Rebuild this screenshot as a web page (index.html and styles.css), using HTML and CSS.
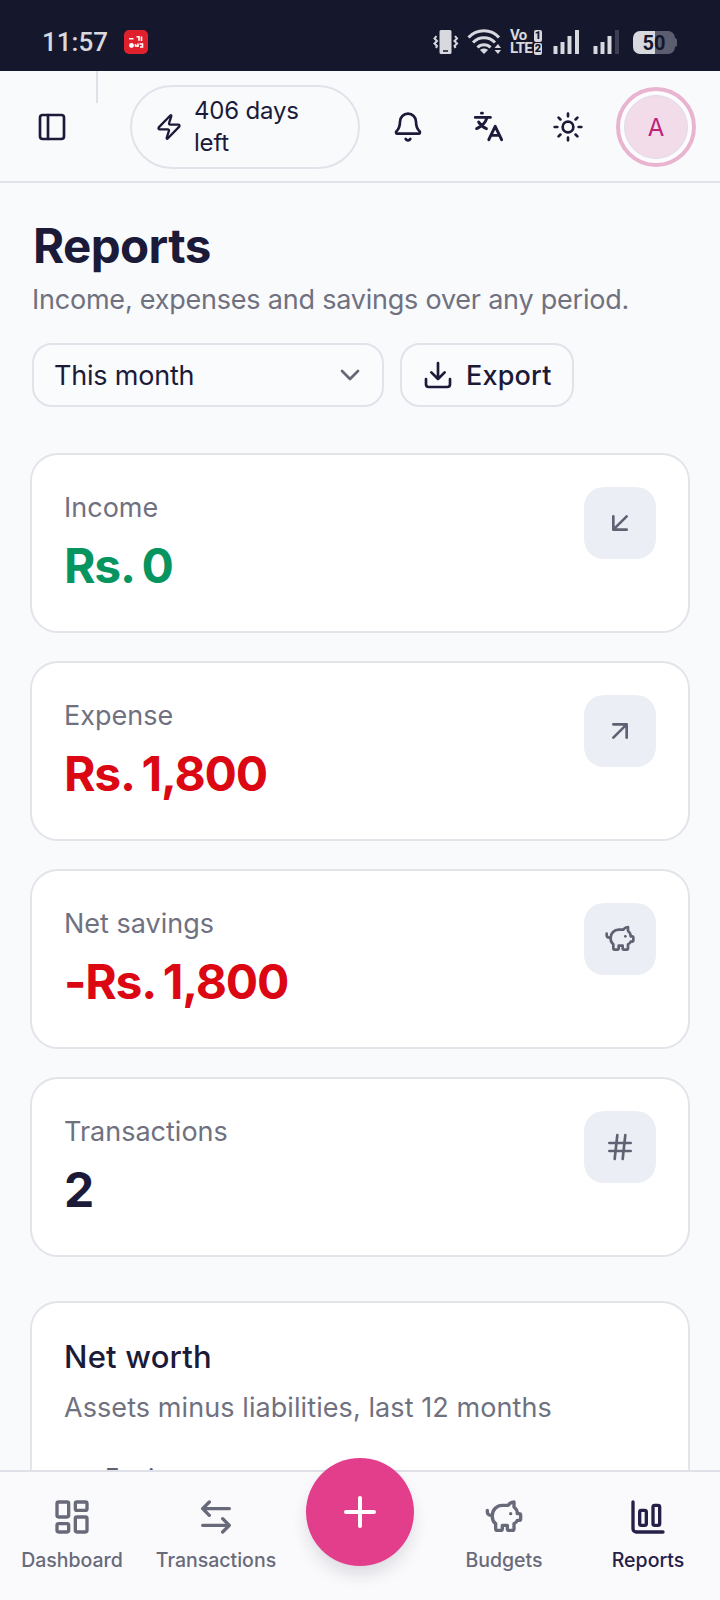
FILE: index.html
```html
<!DOCTYPE html>
<html lang="en">
<head>
<meta charset="utf-8">
<title>Reports</title>
<link rel="stylesheet" href="styles.css">
</head>
<body>
<svg class="defs" aria-hidden="true">
  <symbol id="piggy" viewBox="0 0 24 24"><path d="M11 17h3v2a1 1 0 0 0 1 1h2a1 1 0 0 0 1-1v-3a3.160 3.160 0 0 0 2-2h1a1 1 0 0 0 1-1v-2a1 1 0 0 0-1-1h-1a5 5 0 0 0-2-4V3a4 4 0 0 0-3.200 1.600l-.300.400H11a6 6 0 0 0-6 6v1a5 5 0 0 0 2 4v3a1 1 0 0 0 1 1h2a1 1 0 0 0 1-1z"/><path d="M16 10h.010"/><path d="M2 8v1a2 2 0 0 0 2 2h1"/></symbol>
</svg>
<div class="screen">
  <div class="status">
    <span class="clock">11:57</span>
    <svg class="app-badge" viewBox="0 0 24 24"><rect width="24" height="24" rx="5" fill="#e0202c"/><g stroke="#fff" fill="none" stroke-width="1.600"><path d="M5 8.700h4.500M12.500 6.800h2.500v4M17.500 6.500v4.500M11.500 14v2h2M14 13.500v3.500M15.500 14h3v3h-2.500"/></g><circle cx="7.500" cy="15.500" r="2.400" fill="#fff"/></svg>
    <div class="status-icons">
      <svg class="vibrate" viewBox="0 0 26 26"><path d="M8 1h9a1.500 1.500 0 0 1 1.500 1.500v21A1.500 1.500 0 0 1 17 25H8a1.500 1.500 0 0 1-1.500-1.500v-21A1.500 1.500 0 0 1 8 1z" fill="#d8d8df"/><path d="M10 22h5" stroke="#15172d" stroke-width="1.500"/><path d="M3.500 7 1.500 9.500l2.500 2.500-2.500 2.500 2.500 2.500-1 2M22 7l2 2.500-2.500 2.500 2.500 2.500-2.500 2.500 1 2" fill="none" stroke="#d8d8df" stroke-width="2"/></svg>
      <svg class="wifi" viewBox="0 0 34 26"><g fill="none" stroke="#d8d8df" stroke-width="3"><path d="M1.500 8.500C10-.400 24-.400 32 8.500"/><path d="M6 13.500c6-6.300 16-6.300 22 0"/><path d="M10.500 18.500c3.500-3.800 9.500-3.800 13 0"/></g><path d="M13 21c2.300-2 5.700-2 8 0L17 25z" fill="#d8d8df"/><path d="M27.500 19 31 15l3 4zM27.500 21h6.500L31 25z" fill="#d8d8df"/></svg>
      <div class="volte"><div>Vo<b>1</b></div><div>LTE<b>2</b></div></div>
      <svg class="bars" viewBox="0 0 28 26"><path d="M2.500 17v8M9.500 13v12M16.500 7v18M24 1v24" stroke="#d8d8df" stroke-width="4"/></svg>
      <svg class="bars bars-two" viewBox="0 0 28 26"><path d="M2.500 17v8M9.500 13v12M16.500 7v18" stroke="#d8d8df" stroke-width="4"/><path d="M24 1v24" stroke="#3d3e52" stroke-width="4"/></svg>
      <div class="battery"><span>50</span></div><i class="nub"></i>
    </div>
  </div>

  <header class="topbar">
    <span class="divider"></span>
    <svg class="ico panel" viewBox="0 0 24 24"><rect x="3" y="3" width="18" height="18" rx="2"/><path d="M9 3v18"/></svg>
    <div class="pill">
      <svg class="ico zap" viewBox="0 0 24 24"><path d="M4 14a1 1 0 0 1-.780-1.630l9.900-10.200a.5.5 0 0 1 .860.460l-1.920 6.020A1 1 0 0 0 13 10h7a1 1 0 0 1 .780 1.630l-9.900 10.200a.5.5 0 0 1-.860-.460l1.920-6.020A1 1 0 0 0 11 14z"/></svg>
      <span>406 days left</span>
    </div>
    <svg class="ico bell" viewBox="0 0 24 24"><path d="M10.268 21a2 2 0 0 0 3.464 0"/><path d="M3.262 15.326A1 1 0 0 0 4 17h16a1 1 0 0 0 .740-1.673C19.410 13.956 18 12.499 18 8A6 6 0 0 0 6 8c0 4.499-1.411 5.956-2.738 7.326"/></svg>
    <svg class="ico lang" viewBox="0 0 24 24"><path d="M7.100 1.600h.7M2.500 4.800h11.300M11.200 5.200C10.200 8.500 7.500 11.500 3.500 13.200M5 8.300c1.300 2.300 3.300 4 5.800 5M12.600 21.500l4.800-10 4.800 10M14.200 18.300h6.400"/></svg>
    <svg class="ico sun" viewBox="0 0 24 24"><circle cx="12" cy="12" r="4"/><path d="M12 2v2M12 20v2M4.930 4.930l1.410 1.410M17.660 17.660l1.410 1.410M2 12h2M20 12h2M6.340 17.660l-1.410 1.410M19.070 4.930l-1.410 1.410"/></svg>
    <div class="avatar"><span>A</span></div>
  </header>

  <main class="content">
    <h1>Reports</h1>
    <p class="subtitle">Income, expenses and savings over any period.</p>
    <div class="controls">
      <div class="select"><span>This month</span><svg class="ico chevron" viewBox="0 0 24 24"><path d="m6 9 6 6 6-6"/></svg></div>
      <div class="export"><svg class="ico" viewBox="0 0 24 24"><path d="M12 15V3M21 15v4a2 2 0 0 1-2 2H5a2 2 0 0 1-2-2v-4M7 10l5 5 5-5"/></svg><span>Export</span></div>
    </div>
    <section class="stats">
      <div class="card"><div><p class="label">Income</p><p class="value green">Rs. 0</p></div><div class="tile"><svg class="ico" viewBox="0 0 24 24"><path d="M17 7 7 17M17 17H7V7"/></svg></div></div>
      <div class="card"><div><p class="label">Expense</p><p class="value red">Rs. 1,800</p></div><div class="tile"><svg class="ico" viewBox="0 0 24 24"><path d="M7 7h10v10M7 17 17 7"/></svg></div></div>
      <div class="card"><div><p class="label">Net savings</p><p class="value red">-Rs. 1,800</p></div><div class="tile"><svg class="ico"><use href="#piggy"/></svg></div></div>
      <div class="card"><div><p class="label">Transactions</p><p class="value">2</p></div><div class="tile"><svg class="ico" viewBox="0 0 24 24"><path d="M4 9h16M4 15h16M10 3 8 21M16 3l-2 18"/></svg></div></div>
    </section>
    <section class="worth">
      <h2>Net worth</h2>
      <p class="worth-sub">Assets minus liabilities, last 12 months</p>
      <p class="legend">Equity</p>
    </section>
  </main>

  <nav class="bottom">
    <div class="tab"><svg class="ico" viewBox="0 0 24 24"><rect x="3" y="3" width="7" height="9" rx="1"/><rect x="14" y="3" width="7" height="5" rx="1"/><rect x="14" y="12" width="7" height="9" rx="1"/><rect x="3" y="16" width="7" height="5" rx="1"/></svg><span>Dashboard</span></div>
    <div class="tab"><svg class="ico" viewBox="0 0 24 24"><path d="M8 3 4 7l4 4M4 7h16M16 21l4-4-4-4M20 17H4"/></svg><span>Transactions</span></div>
    <div class="fab"><svg class="ico" viewBox="0 0 24 24"><path d="M5 12h14M12 5v14"/></svg></div>
    <div class="tab"><svg class="ico"><use href="#piggy"/></svg><span>Budgets</span></div>
    <div class="tab active"><svg class="ico" viewBox="0 0 24 24"><path d="M3 3v16a2 2 0 0 0 2 2h16"/><rect x="15" y="5" width="4" height="12" rx="1"/><rect x="7" y="8" width="4" height="9" rx="1"/></svg><span>Reports</span></div>
  </nav>
</div>
</body>
</html>
```
FILE: styles.css
```css
* { box-sizing: border-box; }
body { margin: 0; background: #f9fafc; font-family: Inter, "Liberation Sans", sans-serif; color: #1b1a38; }
h1, h2, p { margin: 0; white-space: nowrap; }
.defs { display: none; }
.screen { width: 720px; height: 1600px; overflow: hidden; display: flex; flex-direction: column; }
.ico { width: 32px; height: 32px; flex: none; display: block; fill: none; stroke: currentColor; stroke-width: 2; stroke-linecap: round; stroke-linejoin: round; }

.status { height: 71px; flex: none; background: #15172d; display: flex; align-items: flex-start; padding: 29px 43px 0 42px; color: #d8d8df; }
.clock { font: 500 26px/26px Roboto, sans-serif; width: 65px; white-space: nowrap; }
.app-badge { width: 24px; height: 24px; margin: 1px 0 0 17px; }
.status-icons { display: flex; margin-left: auto; height: 26px; align-items: center; }
.vibrate { width: 26px; height: 26px; margin-right: -1px; }
.wifi { width: 34px; height: 26px; margin-left: 9px; }
.volte { width: 32px; margin-left: 9px; font: 700 15px/13px Roboto, sans-serif; letter-spacing: -.7px; }
.volte div { display: flex; justify-content: space-between; align-items: center; height: 13px; }
.volte b { background: #d8d8df; color: #15172d; font-size: 11px; line-height: 12px; width: 8px; text-align: center; letter-spacing: 0; border-radius: 2px; }
.bars { width: 28px; height: 26px; margin-left: 11px; }
.bars-two { margin-left: 12px; }
.battery { width: 42px; height: 23px; margin-left: 12px; border-radius: 7px; background: linear-gradient(90deg, #d8d8df 22px, #5c5d6f 22px); color: #15172d; font: 700 20px/24px Roboto, sans-serif; text-align: center; }
.nub { width: 2px; height: 9px; border-radius: 0 2px 2px 0; background: #5c5d6f; }

.topbar { height: 112px; flex: none; border-bottom: 2px solid #e2e3ea; display: flex; align-items: center; position: relative; padding: 2px 0 0 36px; }
.divider { position: absolute; left: 96px; top: 0; width: 2px; height: 32px; background: #e0e1e8; }
.pill { width: 230px; height: 84px; margin-left: 62px; border: 2px solid #e2e3ea; border-radius: 42px; display: flex; align-items: center; padding: 0 24px 0 23px; gap: 11px; font-size: 24px; line-height: 32px; font-weight: 400; }
.pill span { width: 120px; letter-spacing: -.2px; }
.zap { width: 28px; height: 28px; }
.bell { margin-left: 32px; }
.lang, .sun { margin-left: 48px; }
.lang { stroke-width: 2.2; }
.avatar { width: 80px; height: 80px; margin-left: 32px; border: 4px solid #e9b4cf; border-radius: 50%; padding: 4px; background: #fcfcfe; }
.avatar span { display: grid; place-items: center; height: 64px; border-radius: 50%; background: #f3dcea; border: 1px solid #dedde9; color: #bd2478; font-size: 24px; }

.content { flex: 1; min-height: 0; overflow: hidden; padding: 39px 30px 0; }
h1 { font-size: 47.5px; line-height: 48px; font-weight: 700; letter-spacing: -.6px; padding-left: 3px; }
.subtitle { font-size: 27px; line-height: 40px; margin-top: 10px; padding-left: 2px; color: #70717f; letter-spacing: -.22px; }
.controls { display: flex; gap: 16px; padding-left: 2px; margin-top: 23px; }
.select, .export { height: 64px; border: 2px solid #e2e3ea; border-radius: 20px; display: flex; align-items: center; font-size: 27px; background: #fafbfd; }
.select { width: 352px; justify-content: space-between; padding: 0 16px 0 20px; letter-spacing: -.2px; }
.chevron { color: #666878; }
.export { width: 174px; padding-left: 20px; gap: 12px; font-weight: 500; letter-spacing: .2px; }
.stats { display: grid; gap: 28px; margin-top: 46px; }
.card { height: 180px; border: 2px solid #e3e4ea; border-radius: 28px; background: #fff; display: flex; justify-content: space-between; padding: 32px; }
.label { font-size: 27px; line-height: 40px; padding-top: 1px; color: #70717f; }
.value { font-size: 48px; line-height: 64px; font-weight: 700; margin-top: 6px; letter-spacing: -1.2px; word-spacing: -2px; }
.green { color: #07955f; }
.red { color: #db0712; }
.tile { width: 72px; height: 72px; border-radius: 20px; background: #eceef6; color: #606172; display: grid; place-items: center; }
.worth { height: 300px; margin-top: 44px; border: 2px solid #e3e4ea; border-radius: 28px; background: #fff; padding: 36px 32px; }
h2 { font-size: 31px; line-height: 36px; font-weight: 500; letter-spacing: .2px; }
.worth-sub { font-size: 27px; line-height: 40px; margin-top: 13px; color: #70717f; letter-spacing: .08px; }
.legend { font-size: 24px; line-height: 28px; margin: 36px 0 0 41px; color: #606172; }

.bottom { height: 130px; flex: none; border-top: 2px solid #dfe0e8; background: #fafafc; display: grid; grid-template-columns: repeat(5, 144px); position: relative; color: #686a7a; }
.tab { display: flex; flex-direction: column; align-items: center; padding-top: 25px; font-size: 19.5px; line-height: 28px; font-weight: 500; }
.tab .ico { width: 40px; height: 40px; margin-bottom: 9px; }
.active { color: #242047; }
.fab { width: 108px; height: 108px; margin: -14px 0 0 18px; border-radius: 50%; background: #e23e8c; color: #fff; display: grid; place-items: center; box-shadow: 0 10px 18px -3px rgba(30, 30, 60, .16); }
.fab .ico { width: 48px; height: 48px; }
```
